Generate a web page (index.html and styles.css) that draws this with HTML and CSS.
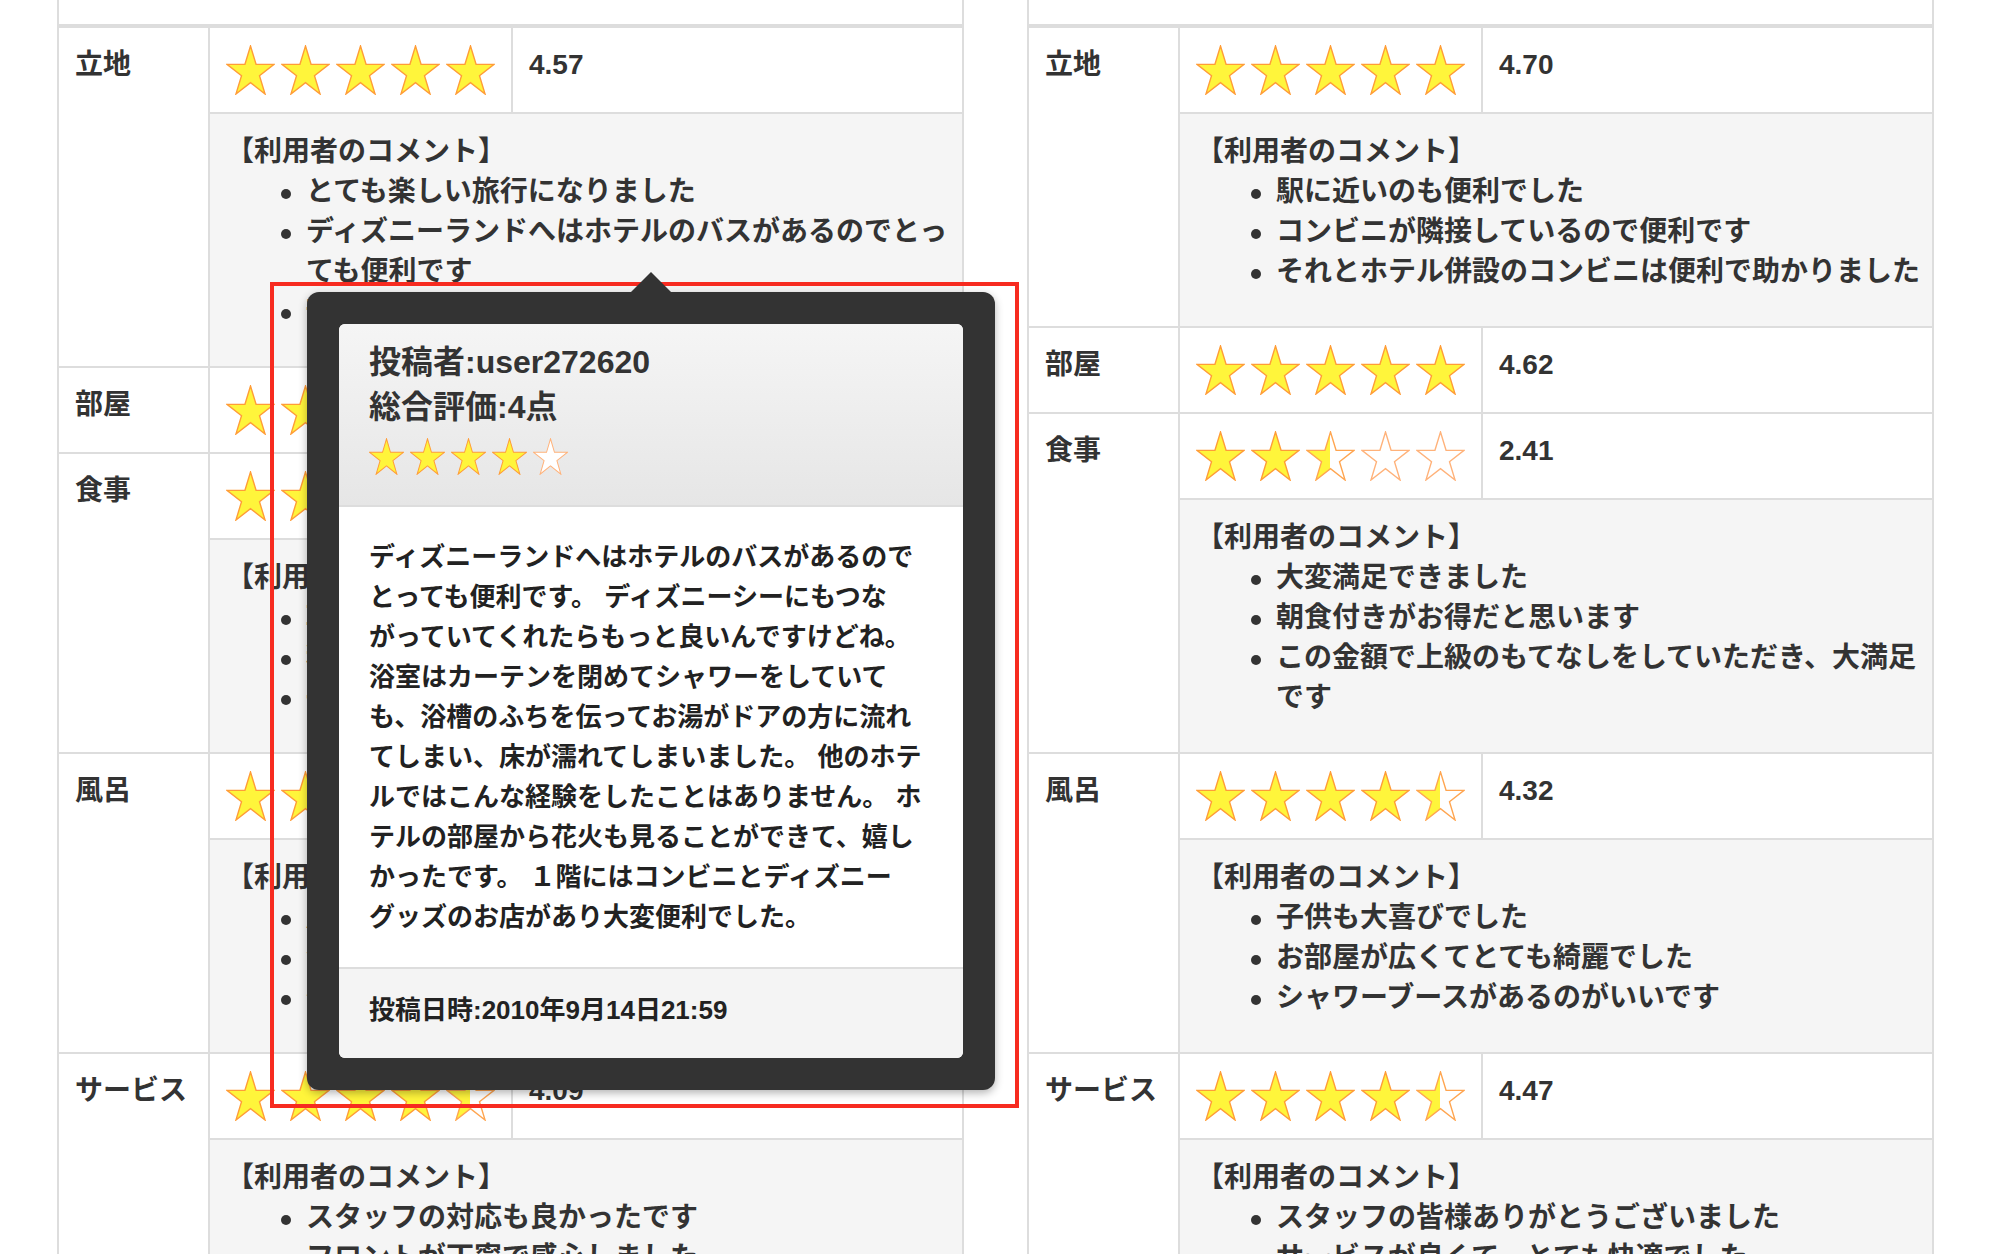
FILE: index.html
```html
<!DOCTYPE html>
<html lang="ja">
<head>
<meta charset="utf-8">
<title>項目別評価</title>
<link rel="stylesheet" href="styles.css">
</head>
<body>
<div class="page">
  <table class="rating">
    <colgroup><col class="c-label"><col class="c-stars"><col class="c-score"></colgroup>
    <thead><tr><th colspan="3">項目別</th></tr></thead>
    <tbody>
      <tr>
        <td class="label" rowspan="2">立地</td>
        <td class="stars"><svg viewBox="0 0 269 52"><use href="#sf" x="0" y="1" width="49" height="50"/><use href="#sf" x="55" y="1" width="49" height="50"/><use href="#sf" x="110" y="1" width="49" height="50"/><use href="#sf" x="165" y="1" width="49" height="50"/><use href="#sf" x="220" y="1" width="49" height="50"/></svg></td>
        <td class="score">4.57</td>
      </tr>
      <tr>
        <td class="comment" colspan="2">
          <div class="c-title">【利用者のコメント】</div>
          <ul>
            <li>とても楽しい旅行になりました</li>
            <li>ディズニーランドへはホテルのバスがあるのでとっても便利です</li>
            <li>部屋から花火が見えました</li>
          </ul>
        </td>
      </tr>
      <tr>
        <td class="label">部屋</td>
        <td class="stars"><svg viewBox="0 0 269 52"><use href="#sf" x="0" y="1" width="49" height="50"/><use href="#sf" x="55" y="1" width="49" height="50"/><use href="#sf" x="110" y="1" width="49" height="50"/><use href="#sf" x="165" y="1" width="49" height="50"/><use href="#sh" x="220" y="1" width="49" height="50"/></svg></td>
        <td class="score">4.21</td>
      </tr>
      <tr>
        <td class="label" rowspan="2">食事</td>
        <td class="stars"><svg viewBox="0 0 269 52"><use href="#sf" x="0" y="1" width="49" height="50"/><use href="#sf" x="55" y="1" width="49" height="50"/><use href="#sf" x="110" y="1" width="49" height="50"/><use href="#sf" x="165" y="1" width="49" height="50"/><use href="#se" x="220" y="1" width="49" height="50"/></svg></td>
        <td class="score">3.65</td>
      </tr>
      <tr>
        <td class="comment" colspan="2">
          <div class="c-title">【利用者のコメント】</div>
          <ul>
            <li>朝食バイキングが美味しかったです</li>
            <li>種類が豊富でした</li>
            <li>子供も喜んでいました</li>
          </ul>
        </td>
      </tr>
      <tr>
        <td class="label" rowspan="2">風呂</td>
        <td class="stars"><svg viewBox="0 0 269 52"><use href="#sf" x="0" y="1" width="49" height="50"/><use href="#sf" x="55" y="1" width="49" height="50"/><use href="#sf" x="110" y="1" width="49" height="50"/><use href="#sf" x="165" y="1" width="49" height="50"/><use href="#se" x="220" y="1" width="49" height="50"/></svg></td>
        <td class="score">3.88</td>
      </tr>
      <tr>
        <td class="comment" colspan="2">
          <div class="c-title">【利用者のコメント】</div>
          <ul>
            <li>広くて快適でした</li>
            <li>清潔感がありました</li>
            <li>少し狭く感じました</li>
          </ul>
        </td>
      </tr>
      <tr>
        <td class="label" rowspan="2">サービス</td>
        <td class="stars"><svg viewBox="0 0 269 52"><use href="#sf" x="0" y="1" width="49" height="50"/><use href="#sf" x="55" y="1" width="49" height="50"/><use href="#sf" x="110" y="1" width="49" height="50"/><use href="#sf" x="165" y="1" width="49" height="50"/><use href="#sh" x="220" y="1" width="49" height="50"/></svg></td>
        <td class="score">4.09</td>
      </tr>
      <tr>
        <td class="comment" colspan="2">
          <div class="c-title">【利用者のコメント】</div>
          <ul>
            <li>スタッフの対応も良かったです</li>
            <li>フロントが丁寧で感心しました</li>
            <li>また利用したいと思います</li>
          </ul>
        </td>
      </tr>
    </tbody>
  </table>

  <table class="rating">
    <colgroup><col class="c-label"><col class="c-stars"><col class="c-score"></colgroup>
    <thead><tr><th colspan="3">項目別</th></tr></thead>
    <tbody>
      <tr>
        <td class="label" rowspan="2">立地</td>
        <td class="stars"><svg viewBox="0 0 269 52"><use href="#sf" x="0" y="1" width="49" height="50"/><use href="#sf" x="55" y="1" width="49" height="50"/><use href="#sf" x="110" y="1" width="49" height="50"/><use href="#sf" x="165" y="1" width="49" height="50"/><use href="#sf" x="220" y="1" width="49" height="50"/></svg></td>
        <td class="score">4.70</td>
      </tr>
      <tr>
        <td class="comment" colspan="2">
          <div class="c-title">【利用者のコメント】</div>
          <ul>
            <li>駅に近いのも便利でした</li>
            <li>コンビニが隣接しているので便利です</li>
            <li>それとホテル併設のコンビニは便利で助かりました</li>
          </ul>
        </td>
      </tr>
      <tr>
        <td class="label">部屋</td>
        <td class="stars"><svg viewBox="0 0 269 52"><use href="#sf" x="0" y="1" width="49" height="50"/><use href="#sf" x="55" y="1" width="49" height="50"/><use href="#sf" x="110" y="1" width="49" height="50"/><use href="#sf" x="165" y="1" width="49" height="50"/><use href="#sf" x="220" y="1" width="49" height="50"/></svg></td>
        <td class="score">4.62</td>
      </tr>
      <tr>
        <td class="label" rowspan="2">食事</td>
        <td class="stars"><svg viewBox="0 0 269 52"><use href="#sf" x="0" y="1" width="49" height="50"/><use href="#sf" x="55" y="1" width="49" height="50"/><use href="#sh" x="110" y="1" width="49" height="50"/><use href="#se" x="165" y="1" width="49" height="50"/><use href="#se" x="220" y="1" width="49" height="50"/></svg></td>
        <td class="score">2.41</td>
      </tr>
      <tr>
        <td class="comment" colspan="2">
          <div class="c-title">【利用者のコメント】</div>
          <ul>
            <li>大変満足できました</li>
            <li>朝食付きがお得だと思います</li>
            <li>この金額で上級のもてなしをしていただき、大満足です</li>
          </ul>
        </td>
      </tr>
      <tr>
        <td class="label" rowspan="2">風呂</td>
        <td class="stars"><svg viewBox="0 0 269 52"><use href="#sf" x="0" y="1" width="49" height="50"/><use href="#sf" x="55" y="1" width="49" height="50"/><use href="#sf" x="110" y="1" width="49" height="50"/><use href="#sf" x="165" y="1" width="49" height="50"/><use href="#sh" x="220" y="1" width="49" height="50"/></svg></td>
        <td class="score">4.32</td>
      </tr>
      <tr>
        <td class="comment" colspan="2">
          <div class="c-title">【利用者のコメント】</div>
          <ul>
            <li>子供も大喜びでした</li>
            <li>お部屋が広くてとても綺麗でした</li>
            <li>シャワーブースがあるのがいいです</li>
          </ul>
        </td>
      </tr>
      <tr>
        <td class="label" rowspan="2">サービス</td>
        <td class="stars"><svg viewBox="0 0 269 52"><use href="#sf" x="0" y="1" width="49" height="50"/><use href="#sf" x="55" y="1" width="49" height="50"/><use href="#sf" x="110" y="1" width="49" height="50"/><use href="#sf" x="165" y="1" width="49" height="50"/><use href="#sh" x="220" y="1" width="49" height="50"/></svg></td>
        <td class="score">4.47</td>
      </tr>
      <tr>
        <td class="comment" colspan="2">
          <div class="c-title">【利用者のコメント】</div>
          <ul>
            <li>スタッフの皆様ありがとうございました</li>
            <li>サービスが良くて、とても快適でした</li>
            <li>また泊まりたいです</li>
          </ul>
        </td>
      </tr>
    </tbody>
  </table>
</div>

<div class="mark"></div>

<div class="popover">
  <div class="pop-inner">
    <div class="pop-head">
      <div>投稿者:user272620</div>
      <div>総合評価:4点</div>
      <svg viewBox="0 0 199 40"><use href="#sf" x="0" y="2" width="35" height="37"/><use href="#sf" x="41" y="2" width="35" height="37"/><use href="#sf" x="82" y="2" width="35" height="37"/><use href="#sf" x="123" y="2" width="35" height="37"/><use href="#se" x="164" y="2" width="35" height="37"/></svg>
    </div>
    <div class="pop-body">ディズニーランドへはホテルのバスがあるのでとっても便利です。 ディズニーシーにもつながっていてくれたらもっと良いんですけどね。浴室はカーテンを閉めてシャワーをしていても、浴槽のふちを伝ってお湯がドアの方に流れてしまい、床が濡れてしまいました。 他のホテルではこんな経験をしたことはありません。 ホテルの部屋から花火も見ることができて、嬉しかったです。 １階にはコンビニとディズニーグッズのお店があり大変便利でした。</div>
    <div class="pop-foot">投稿日時:2010年9月14日21:59</div>
  </div>
</div>

<svg class="defs" aria-hidden="true">
  <defs>
    <linearGradient id="halfg" x1="0" y1="0" x2="1" y2="0">
      <stop offset="0.5" stop-color="#fff53b"/>
      <stop offset="0.5" stop-color="#ffffff"/>
    </linearGradient>
  </defs>
  <symbol id="sf" viewBox="0 0 50 50" preserveAspectRatio="none">
    <polygon points="25,1 30.67,19.33 49,19.33 34.17,30.66 39.84,49 25,37.66 10.16,49 15.83,30.66 1,19.33 19.33,19.33" fill="#fff53b" stroke="#ff9c38" stroke-width="1.4"/>
  </symbol>
  <symbol id="se" viewBox="0 0 50 50" preserveAspectRatio="none">
    <polygon points="25,1 30.67,19.33 49,19.33 34.17,30.66 39.84,49 25,37.66 10.16,49 15.83,30.66 1,19.33 19.33,19.33" fill="#ffffff" stroke="#ffb27a" stroke-width="1.4"/>
  </symbol>
  <symbol id="sh" viewBox="0 0 50 50" preserveAspectRatio="none">
    <polygon points="25,1 30.67,19.33 49,19.33 34.17,30.66 39.84,49 25,37.66 10.16,49 15.83,30.66 1,19.33 19.33,19.33" fill="url(#halfg)" stroke="#ffa550" stroke-width="1.4"/>
  </symbol>
</svg>
</body>
</html>
```

FILE: styles.css
```css
html, body {
  margin: 0;
  padding: 0;
  height: 100%;
  overflow: hidden;
}

body {
  position: relative;
  background: #fff;
  color: #333;
  font-family: "Liberation Sans", "Noto Sans CJK JP", sans-serif;
  font-weight: bold;
  font-size: 28px;
  line-height: 40px;
  line-break: strict;
  text-spacing-trim: space-all;
}

.page {
  display: flex;
  align-items: flex-start;
  gap: 63px;
  padding-left: 57px;
  margin-top: -50px;
}

.rating {
  width: 907px;
  flex: none;
  table-layout: fixed;
  border-collapse: separate;
  border-spacing: 0;
  border: 2px solid #ddd;
  border-left: 0;
}

.rating .c-label { width: 151px; }
.rating .c-stars { width: 303px; }

.rating th,
.rating td {
  padding: 16px;
  border-top: 2px solid #ddd;
  border-left: 2px solid #ddd;
  text-align: left;
  vertical-align: top;
  font-weight: bold;
}

.rating td.label,
.rating td.score {
  padding-top: 17px;
  padding-bottom: 15px;
}

.rating thead th {
  border-top: 0;
  border-bottom: 2px solid #ddd;
}

.stars svg {
  display: block;
  width: 269px;
  height: 52px;
}

.rating td.comment {
  background: #f5f5f5;
  padding: 18px 6px 14px 16px;
}

.comment ul {
  margin: 0 0 20px;
  padding-left: 80px;
  list-style: none;
}

.comment li::before {
  content: "";
  display: inline-block;
  width: 10px;
  height: 10px;
  margin-left: -25px;
  margin-right: 15px;
  border-radius: 50%;
  background: #333;
  vertical-align: 2px;
}

.mark {
  position: absolute;
  left: 270px;
  top: 282px;
  width: 749px;
  height: 826px;
  box-sizing: border-box;
  border: 4px solid #f72b20;
  z-index: 1;
}

.popover {
  position: absolute;
  left: 307px;
  top: 292px;
  width: 688px;
  box-sizing: border-box;
  padding: 32px;
  background: #333;
  border-radius: 12px;
  box-shadow: 0 3px 8px rgba(0, 0, 0, 0.3);
  z-index: 2;
}

.popover::before {
  content: "";
  position: absolute;
  left: 50%;
  top: -20px;
  margin-left: -20px;
  border: 20px solid transparent;
  border-top: 0;
  border-bottom-color: #333;
}

.pop-inner {
  background: #fff;
  border-radius: 6px;
  overflow: hidden;
}

.pop-head {
  padding: 16px 30px 29px;
  background: linear-gradient(#f5f5f5, #e6e6e6);
  border-bottom: 2px solid #ddd;
  font-size: 32px;
  line-height: 45px;
}

.pop-head svg {
  display: block;
  width: 199px;
  height: 40px;
  margin-top: 6px;
}

.pop-body {
  padding: 30px;
  font-size: 26px;
  line-height: 40px;
  color: #222;
}

.pop-foot {
  padding: 21px 30px 28px;
  background: #f4f4f4;
  border-top: 2px solid #ddd;
  font-size: 26px;
  line-height: 40px;
  color: #222;
}

.defs {
  display: block;
  width: 0;
  height: 0;
}
```
